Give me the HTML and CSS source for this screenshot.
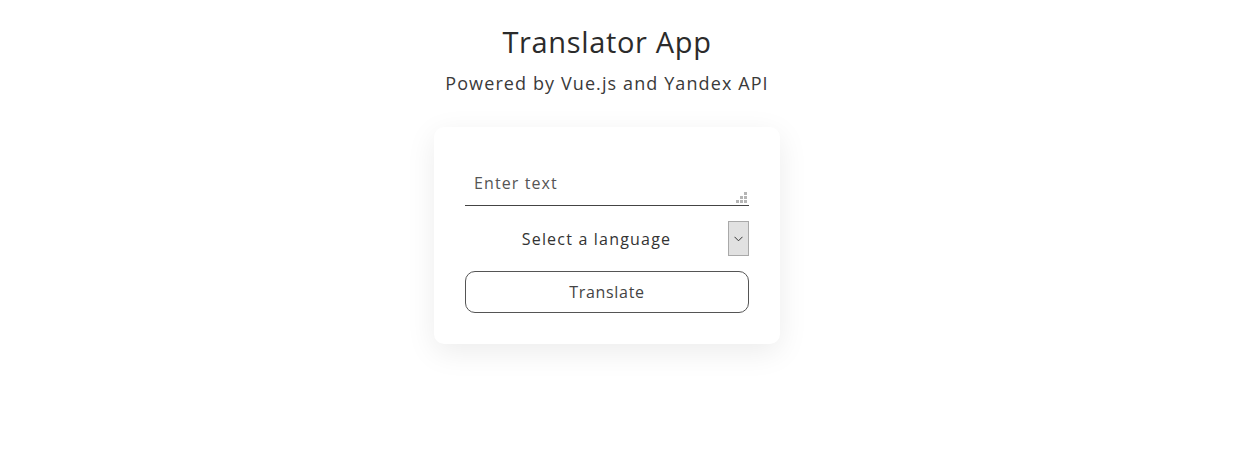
FILE: index.html
```html
<!DOCTYPE html>
<html lang="en">
<head>
<meta charset="utf-8">
<title>Translator App</title>
<link rel="stylesheet" href="styles.css">
</head>
<body>
<div class="app">
  <h1 class="title">Translator App</h1>
  <p class="subtitle">Powered by Vue.js and Yandex API</p>
  <div class="card">
    <div class="field">
      <div class="textarea">Enter text</div>
      <svg class="grip" width="13" height="12" viewBox="0 0 13 12"><g fill="#b5b5b5"><rect x="9" y="0" width="3" height="3"/><rect x="5" y="4" width="3" height="3"/><rect x="9" y="4" width="3" height="3"/><rect x="1" y="8" width="3" height="3"/><rect x="5" y="8" width="3" height="3"/><rect x="9" y="8" width="3" height="3"/></g></svg>
    </div>
    <div class="select">
      <span class="select-label">Select a language</span>
      <span class="select-arrow"><svg width="9" height="6" viewBox="0 0 9 6"><path d="M0.5 0.8 L4.5 4.8 L8.5 0.8" fill="none" stroke="#333" stroke-width="1"/></svg></span>
    </div>
    <button class="btn">Translate</button>
  </div>
</div>
</body>
</html>
```

FILE: styles.css
```css
html, body { margin: 0; padding: 0; background: #fff; }
body { font-family: "Open Sans", "Liberation Sans", sans-serif; color: #333; min-height: 457px; }
.app {
  width: 1214px;
  display: flex;
  flex-direction: column;
  align-items: center;
  padding: 24px 0 80px;
}
.title {
  margin: 0;
  font-size: 29px;
  font-weight: 500;
  line-height: 36px;
  color: #2b2b2b;
  letter-spacing: 0.65px;
}
.subtitle {
  margin: 10px 0 0;
  font-size: 18px;
  line-height: 26px;
  color: #3a3a3a;
  letter-spacing: 1.1px;
}
.card {
  margin-top: 31px;
  width: 346px;
  height: 217px;
  box-sizing: border-box;
  padding: 55px 31px 0;
  background: #fff;
  border-radius: 10px;
  box-shadow: 0 8px 30px rgba(0,0,0,0.08);
  display: flex;
  flex-direction: column;
}
.field {
  position: relative;
  height: 23px;
  border-bottom: 1px solid #444;
  padding: 0 0 0 9px;
}
.textarea {
  font-size: 16px;
  line-height: 1;
  color: #555;
  margin-top: -7px;
  letter-spacing: 1.1px;
}
.grip { position: absolute; right: 1px; bottom: 1px; }
.select {
  margin-top: 15px;
  height: 35px;
  display: flex;
  align-items: center;
  position: relative;
}
.select-label {
  flex: 1;
  text-align: center;
  font-size: 16px;
  color: #333;
  letter-spacing: 1.2px;
}
.select-arrow {
  width: 19px;
  height: 33px;
  border: 1px solid #a9a9a9;
  background: #e1e1e1;
  display: flex;
  align-items: center;
  justify-content: center;
}
.btn {
  margin-top: 15px;
  height: 42px;
  border: 1px solid #555;
  border-radius: 10px;
  background: #fff;
  font-family: inherit;
  font-size: 16px;
  color: #444;
  padding: 0;
  letter-spacing: 0.7px;
}
```
